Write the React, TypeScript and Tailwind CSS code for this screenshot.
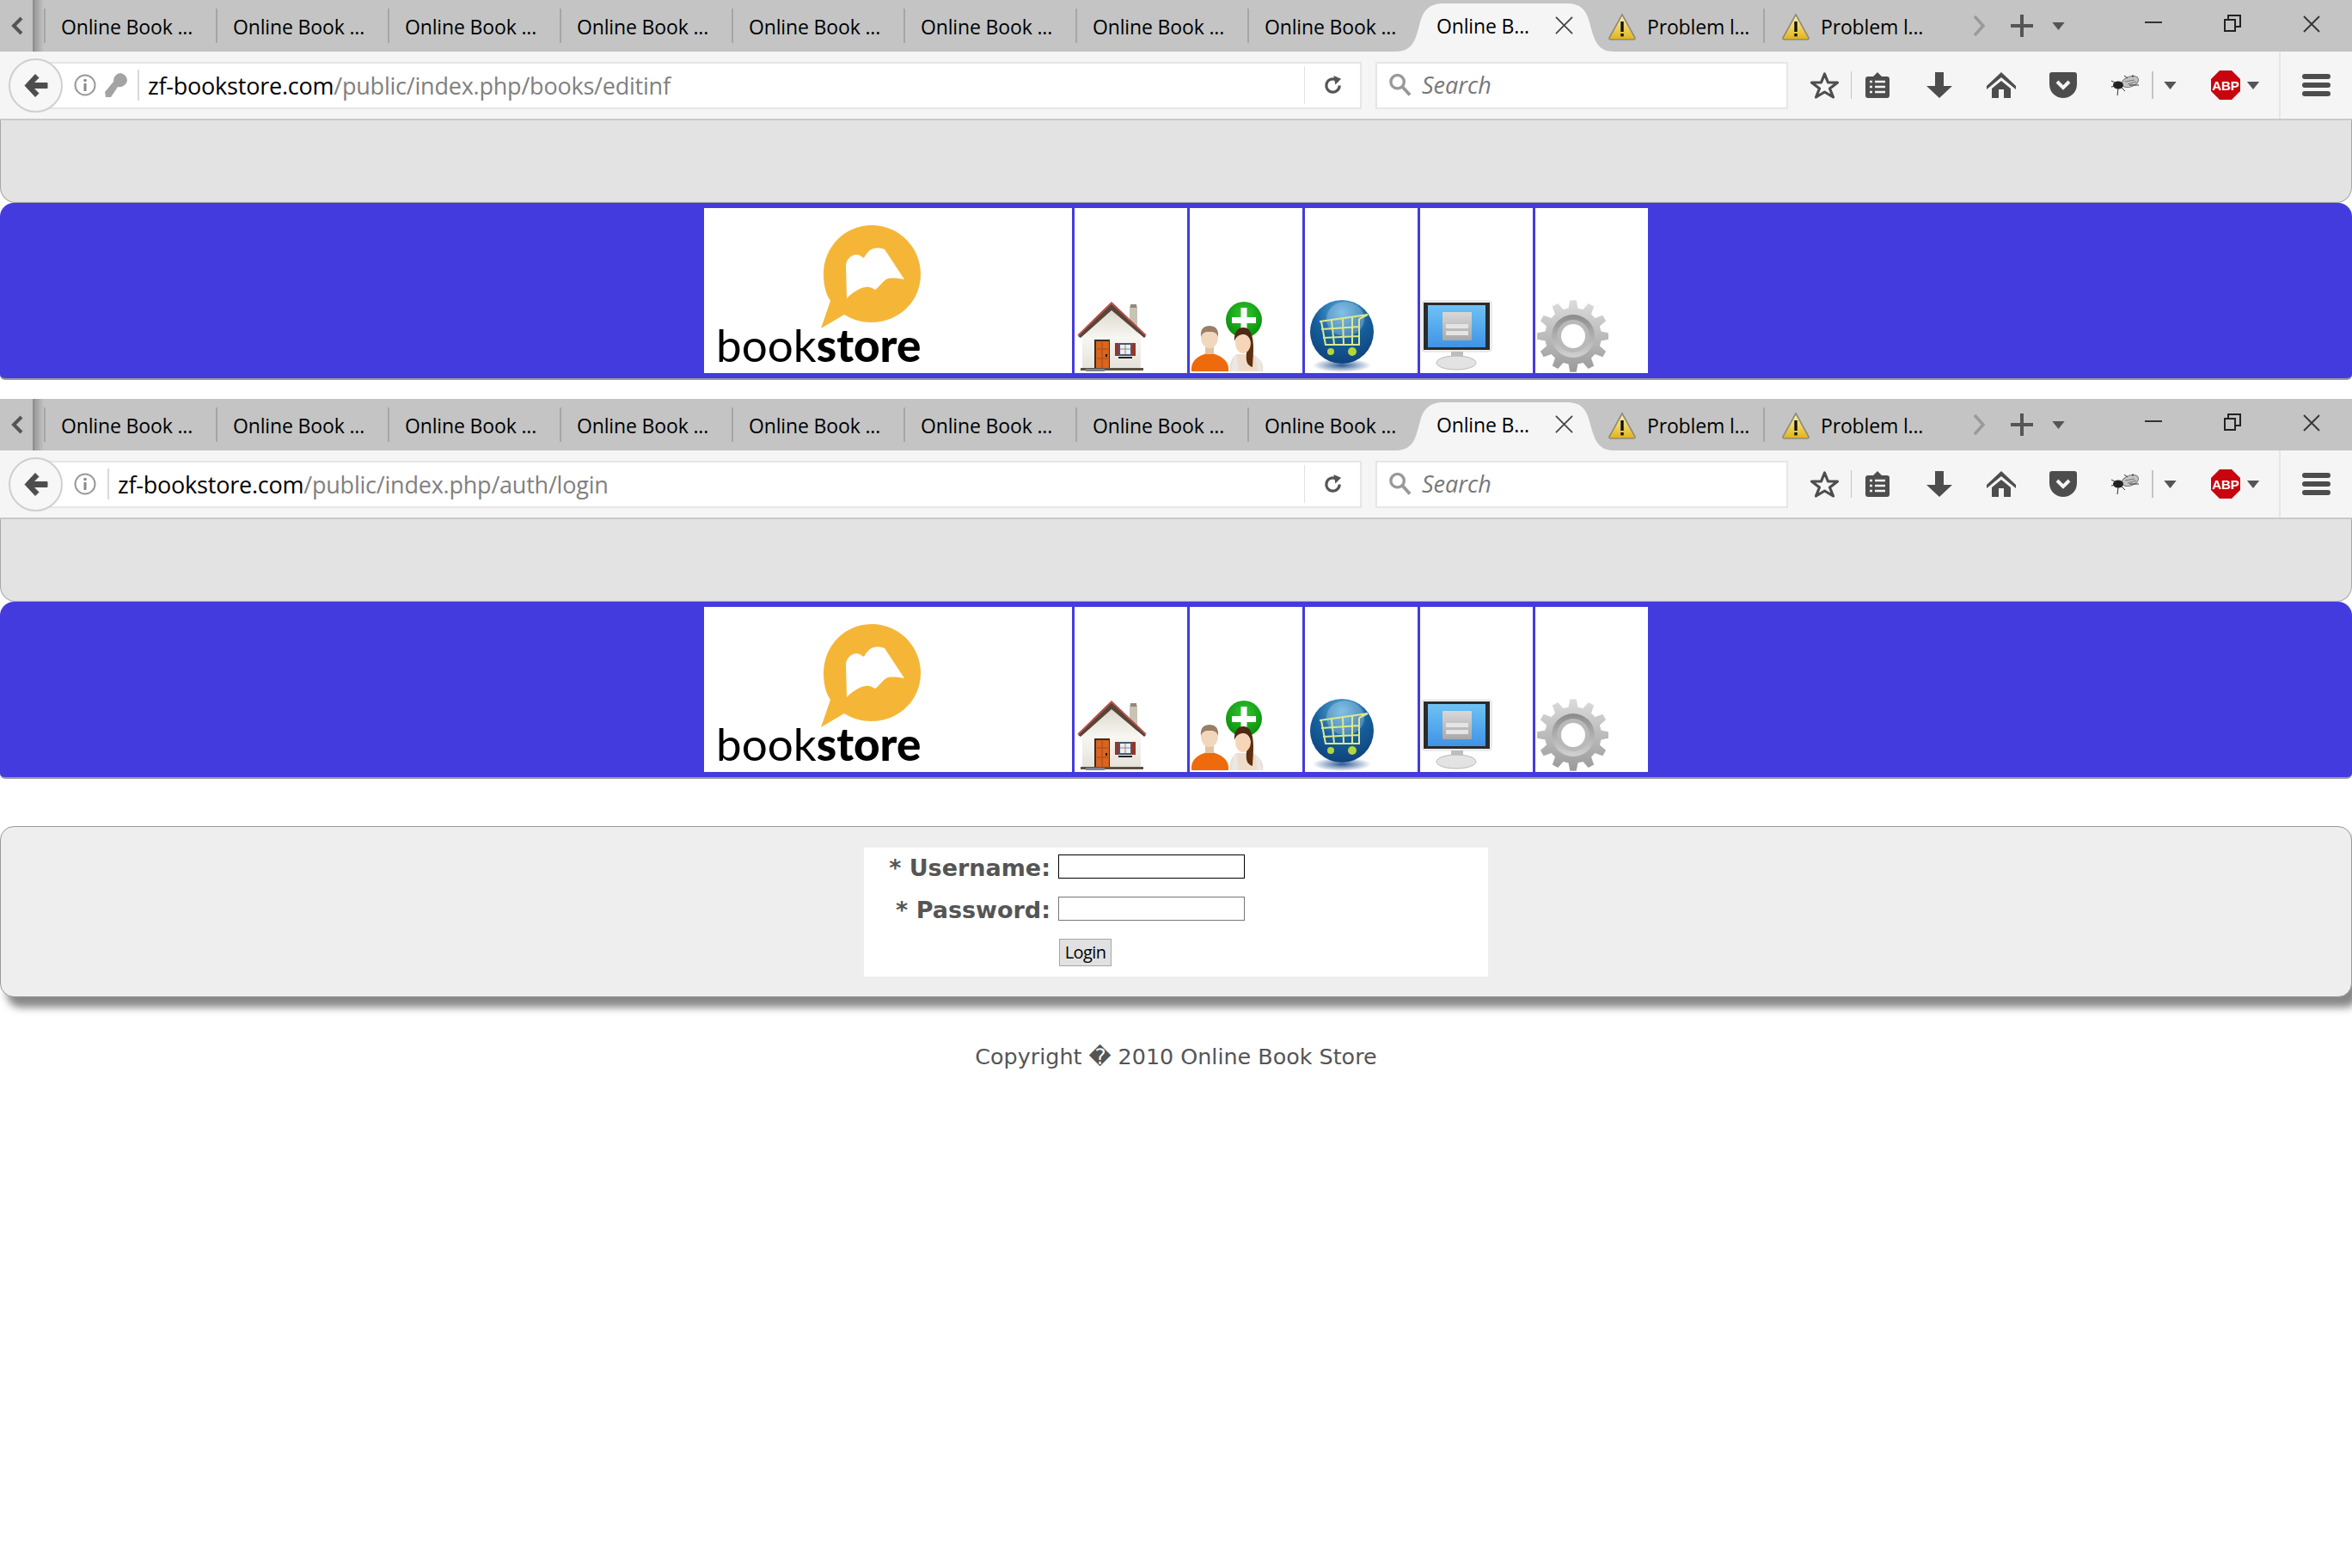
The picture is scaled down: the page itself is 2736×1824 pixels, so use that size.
import { Fragment } from 'react'

const UI_FONT = { fontFamily: '"Open Sans", sans-serif' }

function gearPath(cx: number, cy: number, outer: number, inner: number, teeth: number) {
  const pts: string[] = []
  const step = (Math.PI * 2) / teeth
  for (let i = 0; i < teeth; i++) {
    const a = i * step - Math.PI / 2
    const p = (r: number, t: number) => `${(cx + r * Math.cos(a + t * step)).toFixed(1)} ${(cy + r * Math.sin(a + t * step)).toFixed(1)}`
    pts.push(`${i === 0 ? 'M' : 'L'}${p(inner, -0.32)}`, `L${p(outer, -0.17)}`, `L${p(outer, 0.17)}`, `L${p(inner, 0.32)}`)
  }
  return pts.join(' ') + 'Z'
}

function Warning() {
  return (
    <svg viewBox="0 0 34 32" className="h-[32px] w-[34px] shrink-0">
      <defs>
        <linearGradient id="warnFill" x1="0" y1="0" x2="0" y2="1">
          <stop offset="0" stopColor="#fdf3b0" />
          <stop offset="1" stopColor="#e0b318" />
        </linearGradient>
      </defs>
      <path d="M17 2 L32 29 Q32.500 31 30 31 L4 31 Q1.500 31 2 29Z" fill="url(#warnFill)" stroke="#8f8a78" strokeWidth="1.600" />
      <rect x="15.300" y="10" width="3.400" height="12" fill="#111" />
      <rect x="15.300" y="24" width="3.400" height="3.400" fill="#111" />
    </svg>
  )
}

function Dropdown({ className }: { className: string }) {
  return (
    <svg viewBox="0 0 16 10" className={className}>
      <path d="M0 0 H16 L8 10Z" fill="#555" />
    </svg>
  )
}

function TabBar() {
  return (
    <div className="flex h-[60px] items-stretch overflow-hidden bg-[#c4c4c4] text-[23px] tracking-[-0.15px] text-black" style={UI_FONT}>
      <div className="flex w-[40px] shrink-0 items-center justify-center border-r-2 border-[#8e8e8e]">
        <svg viewBox="0 0 16 22" className="ml-[2px] h-[22px] w-[16px]">
          <path d="M13 2 L4 11 L13 20" fill="none" stroke="#555" strokeWidth="4" />
        </svg>
      </div>
      <div className="w-[11px] shrink-0 bg-gradient-to-r from-[#9a9a9a] to-[#c4c4c4]" />
      {Array.from({ length: 8 }).map((_, i) => (
        <div key={i} className="my-[10px] flex w-[200px] shrink-0 items-center border-l-2 border-[#a6a6a6] pl-[18px] pt-[2px]">
          Online Book ...
        </div>
      ))}
      <div className="relative z-10 -ml-[28px] -mr-[26px] mt-[4px] flex w-[254px] shrink-0 items-center pb-[3px] pl-[48px]">
        <svg viewBox="0 0 254 56" className="absolute inset-0 h-full w-full">
          <path d="M0 56 C22 56 24 40 29 22 C33 6 42 0 56 0 H200 C214 0 222 6 226 22 C231 40 234 56 254 56Z" fill="#f5f5f5" />
        </svg>
        <span className="relative w-[138px]">Online B...</span>
        <svg viewBox="0 0 22 22" className="relative -mt-[2px] h-[21px] w-[21px]">
          <path d="M1 1 L21 21 M21 1 L1 21" stroke="#444" strokeWidth="1.800" />
        </svg>
      </div>
      {[0, 1].map(i => (
        <div key={i} className={`my-[10px] flex w-[200px] shrink-0 items-center gap-[12px] pl-[19px] pt-[2px] ${i === 0 ? '' : 'border-l-2 border-[#a6a6a6]'}`}>
          <Warning />
          Problem l...
        </div>
      ))}
      <svg viewBox="0 0 15 26" className="ml-[44px] h-[26px] w-[15px] shrink-0 self-center">
        <path d="M2 2 L12 13 L2 24" fill="none" stroke="#9a9a9a" strokeWidth="3.500" />
      </svg>
      <svg viewBox="0 0 30 30" className="ml-[27px] h-[30px] w-[30px] shrink-0 self-center">
        <path d="M15 2 V28 M2 15 H28" stroke="#555" strokeWidth="4" />
      </svg>
      <Dropdown className="ml-[19px] h-[9px] w-[17px] shrink-0 self-center" />
      <div className="ml-[92px] mb-[8px] h-[2px] w-[20px] shrink-0 self-center bg-[#333]" />
      <svg viewBox="0 0 20 20" className="ml-[72px] mb-[6px] h-[20px] w-[20px] shrink-0 self-center">
        <path d="M1 6 H13 V19 H1Z M5 6 V1 H19 V14 H13" fill="none" stroke="#222" strokeWidth="2" />
      </svg>
      <svg viewBox="0 0 20 20" className="ml-[72px] mb-[5px] h-[20px] w-[20px] shrink-0 self-center">
        <path d="M1 1 L19 19 M19 1 L1 19" stroke="#333" strokeWidth="1.800" />
      </svg>
    </div>
  )
}

function InfoIcon() {
  return (
    <svg viewBox="0 0 26 26" className="h-[26px] w-[26px] shrink-0">
      <circle cx="13" cy="13" r="11.500" fill="none" stroke="#999" strokeWidth="2" />
      <circle cx="13" cy="7.500" r="1.800" fill="#888" />
      <rect x="11.500" y="11" width="3" height="9" fill="#888" />
    </svg>
  )
}

function Toolbar({ host, path, hasKey }: { host: string; path: string; hasKey?: boolean }) {
  return (
    <div className="flex h-[80px] items-center overflow-hidden border-b-2 border-[#c9c9c9] bg-[#f5f5f5]" style={UI_FONT}>
      {/* back button sits over the start of the url box */}
      <div className="relative z-10 ml-[10px] flex h-[63px] w-[63px] shrink-0 items-center justify-center rounded-full border-2 border-[#cfcfcf] bg-[#f7f7f7]">
        <svg viewBox="0 0 30 30" className="h-[31px] w-[30px]">
          <path d="M14 2 L2 15 L14 28 L18 24 L12 18 H28 V12 H12 L18 6Z" fill="#4d4d4d" stroke="#4d4d4d" strokeLinejoin="round" strokeWidth="1" />
        </svg>
      </div>
      <div className="-ml-[20px] flex h-[55px] w-[1531px] shrink-0 items-center border-2 border-[#e6e6e6] bg-white pl-[31px]">
        <InfoIcon />
        {hasKey && (
          <svg viewBox="0 0 28 30" className="ml-[9px] h-[30px] w-[28px] shrink-0">
            <path d="M19 1 A9 9 0 0 1 27 10 A9 9 0 0 1 16 17 L8 29 L2 29 L1 23 L11 11 A9 9 0 0 1 19 1Z" fill="#a3a3a3" />
          </svg>
        )}
        <div className={`h-[36px] w-[2px] shrink-0 bg-[#d9d9d9] ${hasKey ? 'ml-[11px]' : 'ml-[13px]'}`} />
        <div className="ml-[10px] flex-1 whitespace-nowrap pt-[2px] text-[27px] tracking-[-0.22px]">
          <span className="text-black">{host}</span>
          <span className="text-[#808080]">{path}</span>
        </div>
        <div className="h-[44px] w-[1px] shrink-0 bg-[#e2e2e2]" />
        <svg viewBox="0 0 24 24" className="ml-[21px] mr-[20px] h-[23px] w-[23px] shrink-0">
          <path d="M20 12 A8 8 0 1 1 15 4.600" fill="none" stroke="#555" strokeWidth="3.400" />
          <path d="M13 0 L22 4 L15 11Z" fill="#555" />
        </svg>
      </div>
      <div className="ml-[16px] flex h-[55px] w-[480px] shrink-0 items-center gap-[12px] border-2 border-[#e6e6e6] bg-white pl-[13px] text-[27px] italic text-[#777]">
        <svg viewBox="0 0 28 30" className="h-[30px] w-[27px] shrink-0">
          <circle cx="11" cy="11" r="8" fill="none" stroke="#999" strokeWidth="3.500" />
          <path d="M17 17 L26 27" stroke="#999" strokeWidth="4" />
        </svg>
        Search
      </div>
      <svg viewBox="0 0 34 32" className="ml-[25px] h-[32px] w-[35px] shrink-0">
        <path d="M17 3 L21 13 L32 13 L23 20 L27 30 L17 24 L7 30 L11 20 L2 13 L13 13Z" fill="none" stroke="#4d4d4d" strokeWidth="3.200" strokeLinejoin="round" />
      </svg>
      <div className="ml-[13px] h-[32px] w-[1px] shrink-0 bg-[#c4c4c4]" />
      <svg viewBox="0 0 28 30" className="ml-[16px] h-[30px] w-[28px] shrink-0">
        <path d="M14 0 L19 5 H25 Q28 5 28 8 V27 Q28 30 25 30 H3 Q0 30 0 27 V8 Q0 5 3 5 H9Z" fill="#4d4d4d" />
        <path d="M5 11 H8 M11 11 H23 M5 17 H8 M11 17 H23 M5 23 H8 M11 23 H23" stroke="#f5f5f5" strokeWidth="2.600" />
      </svg>
      <svg viewBox="0 0 30 30" className="ml-[43px] h-[30px] w-[30px] shrink-0">
        <path d="M10 0 H20 V16 H30 L15 30 L0 16 H10Z" fill="#4d4d4d" />
      </svg>
      <svg viewBox="0 0 34 30" className="ml-[40px] h-[30px] w-[34px] shrink-0">
        <path d="M17 0 L34 16 V20 L17 6 L0 20 V16Z M17 10 L28 19 V30 H20 V20 H14 V30 H6 V19Z" fill="#4d4d4d" />
      </svg>
      <svg viewBox="0 0 32 30" className="ml-[39px] h-[30px] w-[32px] shrink-0">
        <path d="M3 0 H29 Q32 0 32 3 V14 C32 24 24 30 16 30 C8 30 0 24 0 14 V3 Q0 0 3 0Z" fill="#4d4d4d" />
        <path d="M9 11 L16 18 L23 11" fill="none" stroke="#f5f5f5" strokeWidth="4" />
      </svg>
      {/* fly icon of the add-on */}
      <svg viewBox="0 0 35 26" className="ml-[39px] h-[26px] w-[35px] shrink-0">
        <ellipse cx="23" cy="9" rx="10" ry="6" transform="rotate(-20 23 9)" fill="#c4c4c4" stroke="#777" strokeWidth="1" />
        <path d="M17 9 L28 7 M20 12 L30 9" stroke="#777" strokeWidth="1" />
        <ellipse cx="9" cy="13" rx="6" ry="4.500" fill="#222" />
        <path d="M1 8 L7 11 M1 15 L6 14 M9 17 L8 25 M13 16 L17 20 M22 13 L33 13 M16 2 L20 5 M26 1 L26 4" stroke="#333" strokeWidth="1" />
      </svg>
      <div className="ml-[13px] h-[32px] w-[2px] shrink-0 bg-[#c4c4c4]" />
      <Dropdown className="ml-[12px] h-[9px] w-[15px] shrink-0" />
      <svg viewBox="0 0 34 34" className="ml-[40px] h-[34px] w-[34px] shrink-0">
        <path d="M10 0 H24 L34 10 V24 L24 34 H10 L0 24 V10Z" fill="#c8050f" />
        <text x="17" y="23" textAnchor="middle" fontSize="15" fontWeight="700" fill="#fff" fontFamily='"Liberation Sans", sans-serif'>ABP</text>
      </svg>
      <Dropdown className="ml-[7px] h-[9px] w-[16px] shrink-0" />
      <div className="ml-[22px] h-full w-[2px] shrink-0 bg-[#e6e6e6]" />
      <div className="ml-[25px] flex w-[33px] shrink-0 flex-col gap-[4px]">
        <div className="h-[6px] rounded-[3px] bg-[#4d4d4d]" />
        <div className="h-[6px] rounded-[3px] bg-[#4d4d4d]" />
        <div className="h-[6px] rounded-[3px] bg-[#4d4d4d]" />
      </div>
    </div>
  )
}

function Logo() {
  return (
    <div className="flex h-full flex-col pl-[14px] pt-[20px]">
      <svg viewBox="0 0 118 120" className="ml-[122px] h-[120px] w-[118px] shrink-0">
        <path d="M59 0 C90 0 116 25 116 57 C116 89 90 113 59 113 C47 113 37 110 27 104 L0 120 L11 88 C5 79 3 68 3 57 C3 25 28 0 59 0Z" fill="#f5b638" />
        <path d="M29 46 C30 38 38 32 45 35 C47 36 49 38 50 38 C52 34 56 28 62 27 C66 26 71 27 74 28 L97 63 C92 62 84 61 78 62 C72 64 68 72 63 75 C59 73 56 71 52 72 C44 73 36 79 30 85Z" fill="#fff" />
      </svg>
      <div className="-mt-[6px] whitespace-nowrap text-[53px] leading-[50px] text-black" style={{ fontFamily: 'Lato, sans-serif' }}>
        <span className="font-normal">book</span>
        <span className="font-black">store</span>
      </div>
    </div>
  )
}

function HouseIcon() {
  return (
    <svg viewBox="0 0 84 84" className="h-[84px] w-[84px]">
      <defs>
        <linearGradient id="wall" x1="0" y1="0" x2="0" y2="1">
          <stop offset="0" stopColor="#d9d5ca" />
          <stop offset="0.500" stopColor="#f7f6f1" />
          <stop offset="1" stopColor="#e4e2da" />
        </linearGradient>
      </defs>
      <rect x="63" y="7" width="9" height="30" fill="#c9c3b4" />
      <rect x="64" y="5" width="7" height="4" fill="#8e8a80" />
      <path d="M42 8 L76 42 V80 H8 V42Z" fill="url(#wall)" />
      <path d="M3 42 L42 4 L82 42 L80 44 L42 12 L6 44Z" fill="#5a4436" />
      <path d="M3 41 L42 3 L82 41" fill="none" stroke="#c33a3a" strokeWidth="1.500" />
      <rect x="22" y="46" width="18" height="34" fill="#3b2b20" />
      <rect x="24" y="48" width="15" height="32" fill="#d9651f" />
      <path d="M31 49 V79 M25 57 H38 M25 68 H38" stroke="#a9481a" strokeWidth="1" />
      <rect x="35" y="63" width="2" height="3" fill="#111" />
      <rect x="46" y="50" width="4" height="15" fill="#9c3324" />
      <rect x="66" y="50" width="4" height="15" fill="#9c3324" />
      <rect x="50" y="50" width="16" height="15" fill="#465a78" />
      <rect x="52" y="52" width="12" height="11" fill="#eef0ee" />
      <path d="M58 52 V63 M52 57 H64" stroke="#888" strokeWidth="1" />
      <rect x="50" y="66" width="16" height="2" fill="#222" />
      <rect x="6" y="79" width="73" height="3" fill="#5b5140" />
      <rect x="12" y="80" width="22" height="3" fill="#7b8390" />
    </svg>
  )
}

function UsersIcon() {
  return (
    <svg viewBox="0 0 84 84" className="h-[84px] w-[84px]">
      <defs>
        <radialGradient id="plusBall" cx="0.500" cy="0.350" r="0.700">
          <stop offset="0" stopColor="#35c734" />
          <stop offset="1" stopColor="#038a06" />
        </radialGradient>
      </defs>
      <circle cx="62" cy="23" r="21" fill="url(#plusBall)" />
      <rect x="48" y="20" width="28" height="7" fill="#fff" />
      <rect x="58.500" y="9" width="7" height="29" fill="#fff" />
      <path d="M1 83 C0 70 8 65 22 61 C36 65 45 70 44 83Z" fill="#ef6a0c" />
      <rect x="17" y="52" width="10" height="11" fill="#e1c4a4" />
      <ellipse cx="22" cy="44" rx="10" ry="12" fill="#f2d7bd" />
      <path d="M12 43 C11 33 16 30 22 30 C28 30 33 33 32 43 C30 37 26 37 22 37 C18 37 14 37 12 43Z" fill="#9a7e66" />
      <path d="M46 83 C45 70 50 65 54 63 L72 63 C78 66 85 72 85 83Z" fill="#efdcc8" />
      <path d="M47 83 L50 66 L54 64 L56 83Z M78 83 L75 64 L81 70 L83 83Z" fill="#e8e8e6" />
      <path d="M68 35 C75 44 73 60 72 78 C66 76 64 72 65 62Z" fill="#5e2f10" />
      <ellipse cx="61" cy="50" rx="9" ry="12" fill="#f6d5b8" />
      <path d="M51 48 C50 36 56 32 61 32 C67 32 72 36 71 50 C68 42 65 40 61 40 C57 40 53 42 51 48Z" fill="#4d2a14" />
    </svg>
  )
}

function CartIcon() {
  return (
    <svg viewBox="0 0 84 84" className="h-[84px] w-[84px]">
      <defs>
        <radialGradient id="cartBall" cx="0.500" cy="0.200" r="0.850">
          <stop offset="0" stopColor="#5fb0e0" />
          <stop offset="0.500" stopColor="#155f9d" />
          <stop offset="1" stopColor="#0f3e78" />
        </radialGradient>
        <radialGradient id="cartShadow">
          <stop offset="0" stopColor="#2c5a96" />
          <stop offset="1" stopColor="#2c5a96" stopOpacity="0" />
        </radialGradient>
      </defs>
      <ellipse cx="42" cy="76" rx="34" ry="8" fill="url(#cartShadow)" />
      <circle cx="42" cy="37" r="37" fill="url(#cartBall)" />
      <ellipse cx="46" cy="22" rx="22" ry="20" fill="#fff" fillOpacity="0.220" />
      <path d="M16 25 L72 17 M18 34 L62 31 M20 44 L62 42 M18 25 L23 52 H62 V22 M30 24 L33 52 M43 22 L44 52 M54 20 L54 52 M62 22 L72 17" fill="none" stroke="#dbe88e" strokeWidth="2" />
      <circle cx="29" cy="60" r="4" fill="#b4d63a" />
      <circle cx="54" cy="60" r="5" fill="#b4d63a" />
    </svg>
  )
}

function MonitorIcon() {
  return (
    <svg viewBox="0 0 84 84" className="h-[84px] w-[84px]">
      <defs>
        <linearGradient id="screen" x1="0" y1="0" x2="0" y2="1">
          <stop offset="0" stopColor="#6fc2f3" />
          <stop offset="1" stopColor="#3f93e6" />
        </linearGradient>
        <linearGradient id="dialog" x1="0" y1="0" x2="0" y2="1">
          <stop offset="0" stopColor="#d8d8d8" />
          <stop offset="1" stopColor="#a8a8a8" />
        </linearGradient>
      </defs>
      <rect x="1" y="1" width="81" height="59" rx="3" fill="#f2f2f2" stroke="#dcdcdc" />
      <rect x="3" y="3" width="77" height="55" fill="#2b2b2b" />
      <rect x="8" y="6" width="67" height="49" fill="url(#screen)" />
      <rect x="25" y="14" width="34" height="33" rx="1" fill="url(#dialog)" />
      <rect x="29" y="28" width="26" height="5" fill="#e4e4e4" />
      <rect x="29" y="36" width="26" height="5" fill="#e4e4e4" />
      <rect x="35" y="60" width="14" height="8" fill="#bdbdbd" />
      <ellipse cx="41" cy="73" rx="23" ry="8" fill="#e3e3e3" stroke="#b8b8b8" />
    </svg>
  )
}

function GearIcon() {
  return (
    <svg viewBox="0 0 84 84" className="h-[84px] w-[84px]">
      <defs>
        <linearGradient id="gearFill" x1="0" y1="0" x2="0" y2="1">
          <stop offset="0" stopColor="#dcdcdc" />
          <stop offset="1" stopColor="#9a9a9a" />
        </linearGradient>
        <linearGradient id="gearRing" x1="0" y1="0" x2="0" y2="1">
          <stop offset="0" stopColor="#8b8b8b" />
          <stop offset="1" stopColor="#d2d2d2" />
        </linearGradient>
      </defs>
      <path d={gearPath(43, 42, 42, 33, 12)} fill="url(#gearFill)" />
      <circle cx="43" cy="42" r="25" fill="url(#gearRing)" />
      <circle cx="43" cy="42" r="19" fill="#b9b9b9" />
      <circle cx="43" cy="42" r="14" fill="#fff" />
    </svg>
  )
}

function Banner() {
  const cells = [HouseIcon, UsersIcon, CartIcon, MonitorIcon, GearIcon]
  return (
    <div className="rounded-t-[16px] rounded-b-[6px] border-b-2 border-[#9a9a9a] bg-[#443bde] p-[6px]">
      <div className="ml-[813px] flex h-[192px] gap-[3px]">
        <div className="w-[428px] overflow-hidden bg-white">
          <Logo />
        </div>
        {cells.map((Icon, i) => (
          <div key={i} className="flex w-[131px] items-end bg-white pb-[1px] pl-[1px]">
            <Icon />
          </div>
        ))}
      </div>
    </div>
  )
}

function BrowserPage({ host, path, hasKey }: { host: string; path: string; hasKey?: boolean }) {
  return (
    <>
      <TabBar />
      <Toolbar host={host} path={path} hasKey={hasKey} />
      <div className="h-[96px] rounded-b-[18px] border-b border-l border-r border-[#a8a8a8] bg-[#e3e3e3]" />
      <Banner />
    </>
  )
}

function LoginForm() {
  const labelClass = 'w-[217px] pt-[3px] text-right text-[27px] font-bold leading-[25px] text-[#555]'
  return (
    <div className="mx-auto mt-[55px] rounded-[16px] border border-[#999] bg-[#eeeeee] pb-[23px] pt-[24px] shadow-[8px_12px_10px_#888]" style={{ fontFamily: '"DejaVu Sans", sans-serif' }}>
      <div className="ml-[1004px] flex w-[726px] flex-col gap-[21px] bg-white pb-[12px] pt-[8px]">
        {['Username', 'Password'].map((name, i) => (
          <Fragment key={name}>
            <div className="flex items-center gap-[9px]">
              <label className={labelClass}>* {name}:</label>
              <input className={`h-[28px] w-[217px] border bg-white ${i === 0 ? 'border-black' : 'border-[#767676]'}`} aria-label={name} />
            </div>
          </Fragment>
        ))}
        <div className="pl-[227px]">
          <button className="h-[32px] w-[61px] border border-[#a6a6a6] bg-[#e1e1e1] text-[20px] tracking-[-0.6px] text-black" style={UI_FONT}>
            Login
          </button>
        </div>
      </div>
    </div>
  )
}

export default function App() {
  return (
    <div className="min-h-screen overflow-hidden bg-white">
      <BrowserPage host="zf-bookstore.com" path="/public/index.php/books/editinf" hasKey />
      <div className="h-[22px]" />
      <BrowserPage host="zf-bookstore.com" path="/public/index.php/auth/login" />
      <LoginForm />
      <p className="mt-[50px] text-center text-[25.4px] leading-[38px] text-[#555]" style={{ fontFamily: '"DejaVu Sans", sans-serif' }}>
        Copyright � 2010 Online Book Store
      </p>
    </div>
  )
}
